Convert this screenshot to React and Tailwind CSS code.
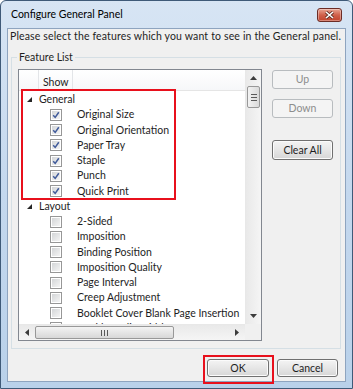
import React from "react";

const general = ["Original Size", "Original Orientation", "Paper Tray", "Staple", "Punch", "Quick Print"];
const layout = [
  "2-Sided",
  "Imposition",
  "Binding Position",
  "Imposition Quality",
  "Page Interval",
  "Creep Adjustment",
  "Booklet Cover Blank Page Insertion",
  "Booklet Split Width",
];

function Expander() {
  return (
    <svg width="5" height="5" viewBox="0 0 5 5">
      <path d="M5 0 L5 5 L0 5 Z" fill="#262626" />
    </svg>
  );
}

function CheckBox({ checked }) {
  return (
    <span className="flex h-[12px] w-[12px] items-center justify-center border border-[#979797] bg-white p-[1px]">
      <span className="flex h-full w-full items-center justify-center bg-gradient-to-br from-[#d4d6d8] to-[#f4f4f4]">
        {checked && (
          <svg width="8" height="8" viewBox="0 0 8 8">
            <path d="M1.2 4.2 L3.2 6.4 L6.8 1.2" stroke="#3f5a9a" strokeWidth="1.5" fill="none" />
          </svg>
        )}
      </span>
    </span>
  );
}

function GroupRow({ name }) {
  return (
    <div className="flex h-[15.25px] shrink-0 items-center">
      <span className="ml-[8px] flex w-[12px] shrink-0">
        <Expander />
      </span>
      <span className="text-[#1e1e1e]">{name}</span>
    </div>
  );
}

function ItemRow({ name, checked }) {
  return (
    <div className="flex h-[15.25px] shrink-0 items-center whitespace-nowrap">
      <span className="ml-[31px] w-[27px] shrink-0">
        <CheckBox checked={checked} />
      </span>
      <span className="text-[#1e1e1e]">{name}</span>
    </div>
  );
}

function Arrow({ dir }) {
  const paths = {
    up: "M0 4 L3.5 0 L7 4 Z",
    down: "M0 0 L7 0 L3.5 4 Z",
    left: "M4 0 L4 7 L0 3.5 Z",
    right: "M0 0 L4 3.5 L0 7 Z",
  };
  const vertical = dir === "up" || dir === "down";
  return (
    <svg width={vertical ? 7 : 4} height={vertical ? 4 : 7} viewBox={vertical ? "0 0 7 4" : "0 0 4 7"}>
      <path d={paths[dir]} fill="#3c3c3c" />
    </svg>
  );
}

function WinButton({ children, disabled, className = "" }) {
  return (
    <div
      className={`flex items-center justify-center rounded-[3px] border ${
        disabled
          ? "border-[#b8bcbf] bg-[#f4f4f4] text-[#8d8d8d]"
          : "border-[#707070] bg-gradient-to-b from-[#f4f4f4] via-[#e6e6e6] to-[#d6d6d6] text-[#1e1e1e] shadow-[inset_0_0_0_1px_#fbfbfb]"
      } ${className}`}
    >
      {children}
    </div>
  );
}

export default function App() {
  return (
    <div className="h-[389px] w-[353px] overflow-hidden bg-white font-['Lato',sans-serif] text-[10.5px] leading-[15px]">
      <div className="flex h-full w-full flex-col rounded-t-[6px] border border-[#3f5a78] bg-gradient-to-b from-[#d7e5f4] via-[#c4d8ee] to-[#b9d1ea]">
        {/* title bar */}
        <div className="flex h-[27px] shrink-0 items-center justify-between pl-[10px] pr-[10px]">
          <span className="text-black">Configure General Panel</span>
          <div className="flex h-[14px] w-[25px] items-center justify-center rounded-[3px] border border-[#6c2d26] bg-gradient-to-b from-[#e8a493] via-[#d0604b] to-[#c2432c] shadow-[inset_0_0_0_1px_rgba(255,255,255,0.35)]">
            <svg width="9" height="8" viewBox="0 0 9 8">
              <path d="M1 1 L8 7 M8 1 L1 7" stroke="#5a2a22" strokeWidth="3" />
              <path d="M1 1 L8 7 M8 1 L1 7" stroke="#ffffff" strokeWidth="1.6" />
            </svg>
          </div>
        </div>

        {/* client area */}
        <div className="mx-[6px] mb-[6px] flex flex-1 flex-col border border-[#8ea4bf] bg-[#f0f0f0]">
          <div className="whitespace-nowrap pl-[2px] tracking-[0.15px] text-[#1e1e1e]">
            Please select the features which you want to see in the General panel.
          </div>

          <fieldset className="ml-[3px] mt-[6px] w-[330px] border border-[#d5dfe5] px-[6px] pb-[7px] pt-[4px]">
            <legend className="-ml-[1px] px-[2px] text-[#1e1e1e]">Feature List</legend>
            <div className="flex gap-[10px]">
              {/* list view */}
              <div className="relative flex h-[272px] w-[244px] flex-col border border-[#828790] bg-white">
                <div className="flex min-h-0 flex-1">
                  <div className="flex min-w-0 flex-1 flex-col overflow-hidden">
                    <div className="mb-[1px] flex h-[21px] shrink-0 items-center border-b border-[#e5e5e5] bg-gradient-to-b from-white to-[#f6f7f9]">
                      <div className="h-full w-[20px] border-r border-[#e3e5e8]" />
                      <div className="flex h-full w-[34px] items-center border-r border-[#e3e5e8] pl-[4px] pt-[4px] text-[#1e1e1e]">
                        Show
                      </div>
                    </div>
                    <GroupRow name="General" />
                    {general.map((g) => (
                      <ItemRow key={g} name={g} checked />
                    ))}
                    <GroupRow name="Layout" />
                    {layout.map((g) => (
                      <ItemRow key={g} name={g} />
                    ))}
                  </div>
                  {/* vertical scrollbar */}
                  <div className="flex w-[16px] shrink-0 flex-col border-l border-[#e8e8e8] bg-gradient-to-r from-[#e9e9e9] to-[#f5f5f5]">
                    <div className="flex h-[16px] items-center justify-center">
                      <Arrow dir="up" />
                    </div>
                    <div className="mx-[1px] flex h-[22px] flex-col items-center justify-center gap-[2px] rounded-[2px] border border-[#989898] bg-gradient-to-r from-[#f3f3f3] to-[#dadada]">
                      <span className="h-[1px] w-[6px] bg-[#5a5a5a]" />
                      <span className="h-[1px] w-[6px] bg-[#5a5a5a]" />
                      <span className="h-[1px] w-[6px] bg-[#5a5a5a]" />
                    </div>
                    <div className="flex-1" />
                    <div className="flex h-[16px] items-center justify-center">
                      <Arrow dir="down" />
                    </div>
                  </div>
                </div>
                {/* horizontal scrollbar */}
                <div className="flex h-[16px] shrink-0">
                  <div className="flex flex-1 items-center border-t border-[#e8e8e8] bg-gradient-to-b from-[#e9e9e9] to-[#f5f5f5]">
                    <div className="flex w-[16px] justify-center">
                      <Arrow dir="left" />
                    </div>
                    <div className="flex h-[13px] w-[139px] items-center justify-center gap-[2px] rounded-[2px] border border-[#989898] bg-gradient-to-b from-[#f3f3f3] to-[#d8d8d8]">
                      <span className="h-[6px] w-[1px] bg-[#5a5a5a]" />
                      <span className="h-[6px] w-[1px] bg-[#5a5a5a]" />
                      <span className="h-[6px] w-[1px] bg-[#5a5a5a]" />
                    </div>
                    <div className="flex-1" />
                    <div className="flex w-[16px] justify-center">
                      <Arrow dir="right" />
                    </div>
                  </div>
                  <div className="w-[16px] bg-[#f0f0f0]" />
                </div>
                {/* highlight */}
                <div className="pointer-events-none absolute left-[2px] top-[19px] h-[111px] w-[155px] border-2 border-[#e8101c]" />
              </div>

              {/* side buttons */}
              <div className="flex w-[61px] flex-col pt-[1px]">
                <WinButton disabled className="h-[19px]">Up</WinButton>
                <WinButton disabled className="mt-[10px] h-[19px]">Down</WinButton>
                <WinButton className="mt-[22px] h-[20px]">Clear All</WinButton>
              </div>
            </div>
          </fieldset>

          <div className="mt-[10px] flex justify-end gap-[8px] pr-[7px]">
            <div className="relative">
              <WinButton className="h-[18px] w-[62px]">OK</WinButton>
              <div className="pointer-events-none absolute -bottom-[7px] -left-[4px] -right-[5px] -top-[4px] border-2 border-[#e8101c]" />
            </div>
            <WinButton className="h-[18px] w-[61px]">Cancel</WinButton>
          </div>
        </div>
      </div>
    </div>
  );
}
